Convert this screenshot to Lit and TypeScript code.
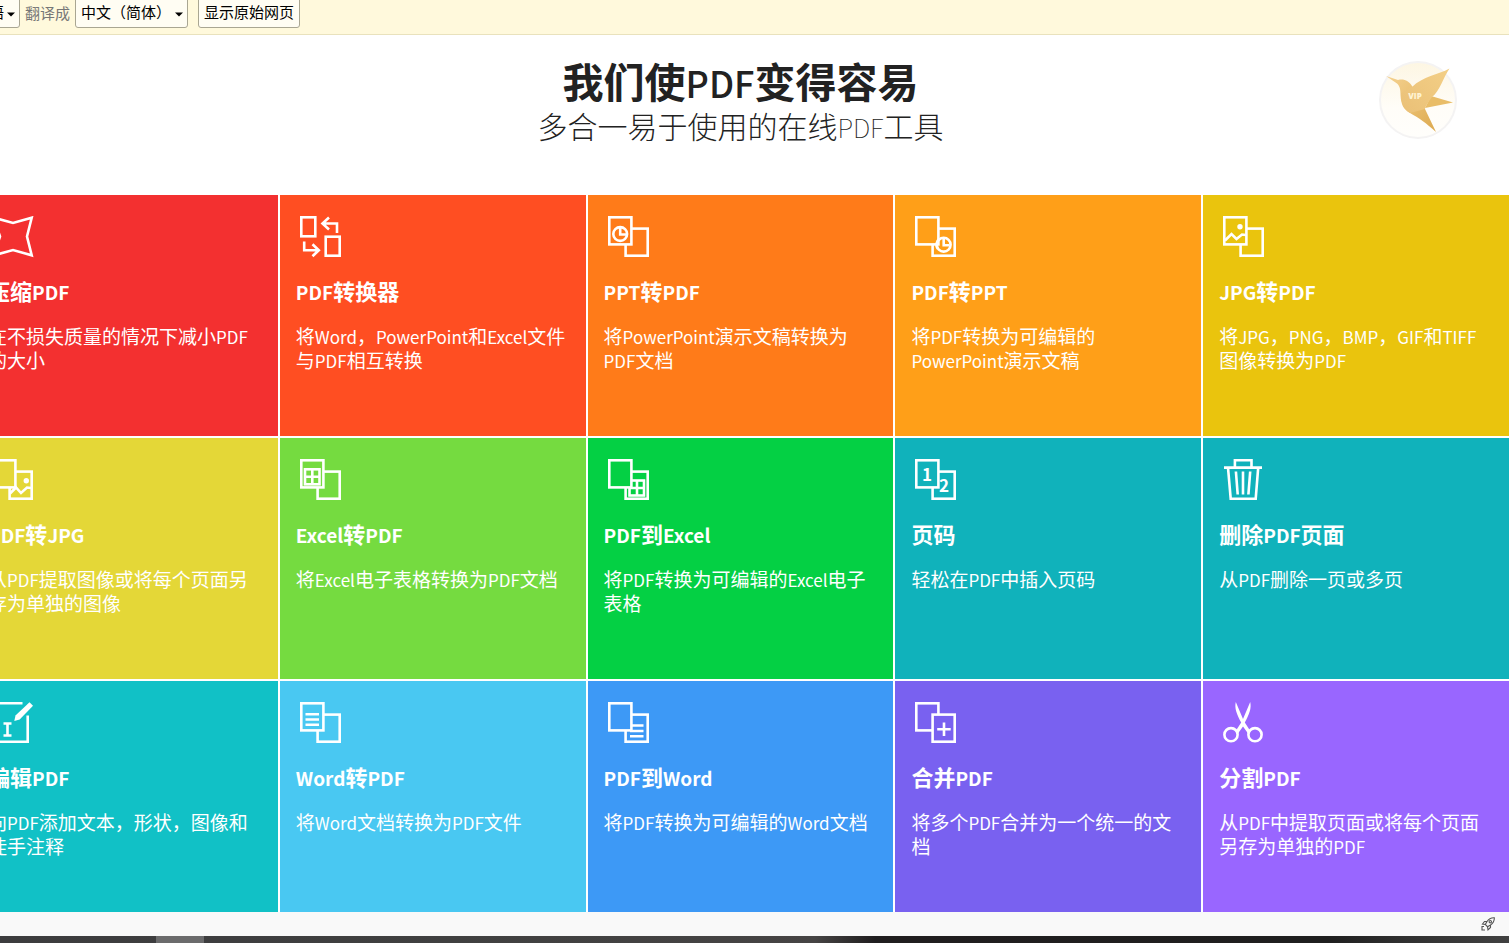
import { LitElement, html, svg, css, SVGTemplateResult } from "lit";
import { customElement, property } from "lit/decorators.js";
import { styleMap } from "lit/directives/style-map.js";

interface Tool {
  title: string;
  text: string;
  color: string;
  icon: string;
}

const TOOLS: Tool[] = [
  { title: "压缩PDF", text: "在不损失质量的情况下减小PDF的大小", color: "#f33030", icon: "compress" },
  { title: "PDF转换器", text: "将Word，PowerPoint和Excel文件与PDF相互转换", color: "#ff4e22", icon: "convert" },
  { title: "PPT转PDF", text: "将PowerPoint演示文稿转换为PDF文档", color: "#ff7b19", icon: "ppt-to" },
  { title: "PDF转PPT", text: "将PDF转换为可编辑的PowerPoint演示文稿", color: "#ff9f18", icon: "to-ppt" },
  { title: "JPG转PDF", text: "将JPG，PNG，BMP，GIF和TIFF图像转换为PDF", color: "#eac40d", icon: "jpg-to" },
  { title: "PDF转JPG", text: "从PDF提取图像或将每个页面另存为单独的图像", color: "#e4d737", icon: "to-jpg" },
  { title: "Excel转PDF", text: "将Excel电子表格转换为PDF文档", color: "#75db40", icon: "excel-to" },
  { title: "PDF到Excel", text: "将PDF转换为可编辑的Excel电子表格", color: "#04d044", icon: "to-excel" },
  { title: "页码", text: "轻松在PDF中插入页码", color: "#10b2bb", icon: "numbers" },
  { title: "删除PDF页面", text: "从PDF删除一页或多页", color: "#10b2bb", icon: "trash" },
  { title: "编辑PDF", text: "向PDF添加文本，形状，图像和徒手注释", color: "#11c1c6", icon: "edit" },
  { title: "Word转PDF", text: "将Word文档转换为PDF文件", color: "#49c8f2", icon: "word-to" },
  { title: "PDF到Word", text: "将PDF转换为可编辑的Word文档", color: "#3d99f6", icon: "to-word" },
  { title: "合并PDF", text: "将多个PDF合并为一个统一的文档", color: "#7961f0", icon: "merge" },
  { title: "分割PDF", text: "从PDF中提取页面或将每个页面另存为单独的PDF", color: "#9966ff", icon: "split" },
];

const back = svg`<rect x="17.6" y="12.6" width="22.1" height="27.1"/>`;
const front = svg`<rect class="sheet" x="1.3" y="1.3" width="22.1" height="27.1"/>`;

const ICONS: Record<string, SVGTemplateResult> = {
  compress: svg`<path d="M1.7 1.7 21 7l18.7-5.3L35 20.5l4.7 18.8L21 34 1.7 39.3 8 20.5Z"/>`,
  convert: svg`<rect x="1.3" y="1.3" width="14" height="19"/><rect x="25.7" y="20.7" width="14" height="19"/>
    <path d="M29 1.5 22.5 7.5 29 13.5M22.5 7.5H37V17"/><path d="M4.2 25.5V34.3H18.5M12.5 28.3 18.8 34.3 12.5 40.3"/>`,
  "ppt-to": svg`${back}${front}<circle cx="12.2" cy="18" r="6.9"/><path d="M12.2 12v6.5H18"/>`,
  "to-ppt": svg`${back}<circle cx="28.7" cy="28.7" r="6.9"/><path d="M28.7 22.7v6.5h5.8"/>${front}
    <path d="M24.5 22.9A6.9 6.9 0 0 0 23 33"/>`,
  "jpg-to": svg`${back}${front}<path d="M2 24.5 8.5 18l5 5L19 18.5l4 .5"/><circle class="solid" cx="17" cy="10.7" r="2.7"/>`,
  "to-jpg": svg`${back}<path d="M18 34.5 24 28.5l5 5.5 6-5.5 4 .5"/><circle class="solid" cx="34.3" cy="21.7" r="2.7"/>${front}`,
  "excel-to": svg`${back}${front}<rect x="5" y="10.3" width="14.5" height="15"/><path d="M12.3 10v15.5M5 17.8h14.5"/>`,
  "to-excel": svg`${back}<rect x="21.5" y="21.5" width="14.5" height="15"/><path d="M29 21v16M21.5 29H36"/>${front}`,
  numbers: svg`${back}${front}<text x="12" y="22">1</text><text x="29" y="33">2</text>`,
  trash: svg`<path d="M11.9 8.3V1.3H28.5V8.3M1 8.6H39M5 8.6 7.7 39.7H32.7L35.2 8.6M12.9 12.5 14.7 35.5M20 12.5V35.5M27.2 12.5 25.4 35.5"/>`,
  edit: svg`<path d="M30.5 1.3H1.3V39.7H35.7V13.5M11.5 21.5h8M11.5 33.5h8M15.5 21.5v12"/>
    <path class="solid" d="M37.5.3 41 3.8 27.7 17.5 22.3 19 23.5 13.5Z"/>`,
  "word-to": svg`${back}${front}<path d="M5.5 12.2H19M5.5 17.5H19M5.5 22.8H19"/>`,
  "to-word": svg`${back}<path d="M22 23.5H35.5M22 29H35.5M22 34.3H35.5"/>${front}`,
  merge: svg`${front}<rect class="sheet" x="17.6" y="12.6" width="22.1" height="27.1"/><path d="M29 20.5v13.5M22.2 27.2H35.7"/>`,
  split: svg`<circle cx="8" cy="32.7" r="6.6"/><circle cx="32" cy="32.7" r="6.6"/>
    <path class="solid" d="M12.8 0C11.4 6 13.5 12 18.2 20.5L12.7 29 14.6 32 20 24.5 25.4 32 27.3 29 21.8 20.5C26.5 12 28.6 6 27.2 0L20 17Z"/>`,
};

/** Wraps Latin words so that they can be set smaller than the Chinese characters around them. */
const mixed = (text: string) =>
  text.split(/([A-Za-z]+)/).map((part) => (/^[A-Za-z]/.test(part) ? html`<span class="latin">${part}</span>` : part));

@customElement("tool-tile")
class ToolTile extends LitElement {
  @property({ attribute: false }) tool!: Tool;

  static styles = css`
    :host { display: grid; }
    .tile {
      display: block;
      padding: 21px 14px 21px 16px;
      color: #fff;
      text-decoration: none;
    }
    .icon {
      display: block;
      width: 42px;
      height: 42px;
      margin-left: 4px;
      fill: none;
      stroke: #fff;
      stroke-width: 2.6;
    }
    .sheet { fill: var(--tile-color); }
    .solid { fill: #fff; stroke: none; }
    .icon text {
      fill: #fff;
      stroke: none;
      font-size: 17px;
      font-weight: 700;
      text-anchor: middle;
    }
    .title {
      margin: 16px 0 18px;
      font-size: 22px;
      line-height: 32px;
      font-weight: 700;
    }
    .text {
      margin: 0;
      font-size: 19px;
      line-height: 24px;
      font-weight: 400;
      text-spacing-trim: space-all;
    }
    .latin { line-height: 0; }
    .title .latin { font-size: 19px; }
    .text .latin { font-size: 17px; }
  `;

  render() {
    const t = this.tool;
    return html`<a class="tile" href="#" style=${styleMap({ "background-color": t.color, "--tile-color": t.color })}>
      <svg class="icon" viewBox="0 0 42 42" aria-hidden="true">${ICONS[t.icon]}</svg>
      <h2 class="title">${mixed(t.title)}</h2>
      <p class="text">${mixed(t.text)}</p>
    </a>`;
  }
}

@customElement("translate-bar")
class TranslateBar extends LitElement {
  static styles = css`
    :host {
      display: flex;
      align-items: flex-start;
      height: 34px;
      flex: none;
      overflow: hidden;
      background: #fff9dc;
      border-bottom: 1px solid #e9e2bd;
      color: #777;
      font-size: 15px;
      line-height: 26px;
    }
    .picker { position: relative; flex: none; margin-top: -4px; }
    .source { margin-left: 18px; }
    select, button {
      box-sizing: border-box;
      height: 32px;
      margin: 0;
      padding: 0 5px 1px;
      border: 1px solid #a9a692;
      border-radius: 3px;
      background: #fffdf3;
      color: #000;
      font: inherit;
    }
    select { appearance: none; width: 113px; }
    .source select { width: 58px; padding: 0 0 1px 11px; }
    .arrow {
      position: absolute;
      right: 5px;
      top: 16px;
      width: 8px;
      height: 5px;
      pointer-events: none;
    }
    .label { margin: 0 5px; }
    button { margin: -4px 0 0 10px; white-space: nowrap; }
  `;

  render() {
    const arrow = html`<svg class="arrow" viewBox="0 0 8 5" aria-hidden="true"><path d="M0 .5h8L4 4.5Z" /></svg>`;
    return html`
      <div class="picker source">
        <select aria-label="原始语言"><option>英语</option></select>${arrow}
      </div>
      <label class="label" for="target">翻译成</label>
      <div class="picker">
        <select id="target"><option>中文（简体）</option></select>${arrow}
      </div>
      <button type="button">显示原始网页</button>
    `;
  }
}

@customElement("app-root")
class AppRoot extends LitElement {
  static styles = css`
    :host {
      display: flex;
      flex-direction: column;
      height: 100vh;
      overflow: hidden;
      background: #fff;
      font-family: "Noto Sans CJK SC", sans-serif;
    }
    .view { flex: 1; min-height: 0; overflow: hidden; position: relative; }
    .page { margin-left: -28px; }
    translate-bar { margin-left: -56px; }
    .hero {
      padding: 18px 0 52px;
      text-align: center;
      color: #222;
    }
    .latin { line-height: 0; }
    h1 { margin: 0; font-size: 41px; line-height: 54px; font-weight: 700; }
    h1 .latin { font-size: 36px; font-weight: 500; }
    .lead { margin: 0; font-size: 30px; line-height: 36px; font-weight: 300; }
    .lead .latin { font-size: 26px; font-weight: 100; }
    .tools {
      display: grid;
      grid-template-columns: repeat(5, minmax(0, 1fr));
      grid-auto-rows: minmax(241px, auto);
      gap: 2px;
    }
    .vip {
      position: absolute;
      top: 24px;
      right: 50px;
      padding: 0;
      border: 0;
      background: none;
      width: 82px;
      height: 82px;
    }
    .vip svg { display: block; }
    .vip text {
      font-family: "Open Sans", sans-serif;
      font-size: 8px;
      font-weight: 800;
      fill: #fff3d2;
      text-anchor: middle;
    }
    .status {
      display: flex;
      flex: none;
      justify-content: flex-end;
      align-items: center;
      height: 24px;
      padding-right: 14px;
      background: #f9f9f9;
    }
    .status button { padding: 0; border: 0; background: none; width: 14px; height: 14px; }
    .rocket { display: block; fill: none; stroke: #555; stroke-width: 1.1; }
    .taskbar {
      display: flex;
      flex: none;
      height: 7px;
      background: linear-gradient(90deg, #3c3c3e 0, #404040 30%, #464444 54%, #201e1f 58%, #1f1f1f 88%, #303030 93%, #414141 100%);
    }
    .active { width: 48px; margin-left: 156px; background: #6b6b6c; }
  `;

  render() {
    return html`
      <translate-bar></translate-bar>
      <main class="view">
        <div class="page">
          <header class="hero">
            <h1>${mixed("我们使PDF变得容易")}</h1>
            <p class="lead">${mixed("多合一易于使用的在线PDF工具")}</p>
          </header>
          <section class="tools">${TOOLS.map((t) => html`<tool-tile .tool=${t}></tool-tile>`)}</section>
        </div>
        <button class="vip" type="button" aria-label="VIP">
          <svg width="82" height="82" viewBox="0 0 82 82">
            <defs>
              <linearGradient id="disc" x1="0" y1="0" x2="0" y2="1"><stop offset="0" stop-color="#fdf6e3" /><stop offset=".6" stop-color="#fffdf8" /><stop offset="1" stop-color="#fffefb" /></linearGradient>
              <linearGradient id="bird" x1="0" y1="0" x2="1" y2="1"><stop offset="0" stop-color="#f4d190" /><stop offset=".5" stop-color="#eabf70" /><stop offset="1" stop-color="#dca94f" /></linearGradient>
              <linearGradient id="wing" x1="0" y1="1" x2="1" y2="0"><stop offset="0" stop-color="#eac077" /><stop offset="1" stop-color="#f3cf86" /></linearGradient>
            </defs>
            <circle cx="41" cy="41" r="39" fill="#f4f3f3" />
            <circle cx="41" cy="41" r="37" fill="url(#disc)" />
            <path d="M54 37 76 43.5 48 49Z" fill="#e9bd68" />
            <path d="M9 17 21 21C27 19.5 32 22 35 27L48 44 48 50 59 73C49 64 42 59 33 54 26 50 24 45 23.5 36 23.5 31 23 27 20 24.5L9 17Z" fill="url(#bird)" />
            <path d="M35 28C46 17 61 16 72.5 9.5 66 19 63 32 55 38 51 44 49 46 48 50L33 54C27 50 24 45 24 34Z" fill="url(#wing)" />
            <text x="38" y="40">VIP</text>
          </svg>
        </button>
      </main>
      <footer class="status">
        <button type="button" aria-label="加速">
          <svg class="rocket" width="14" height="14" viewBox="0 0 14 14">
            <path d="M13.3.7C10 .5 8 1.5 6 4.5L4.3 7.5 6.5 9.7 9.5 8C12.5 6 13.5 4 13.3.7ZM6 4.5H3.5L1.5 7 4.3 7.5M9.5 8V10.5L7 12.8 6.5 9.7M3 9.5H1V13H4" />
            <circle cx="9.3" cy="4.7" r="1.2" />
          </svg>
        </button>
      </footer>
      <div class="taskbar"><div class="active"></div></div>
    `;
  }
}
